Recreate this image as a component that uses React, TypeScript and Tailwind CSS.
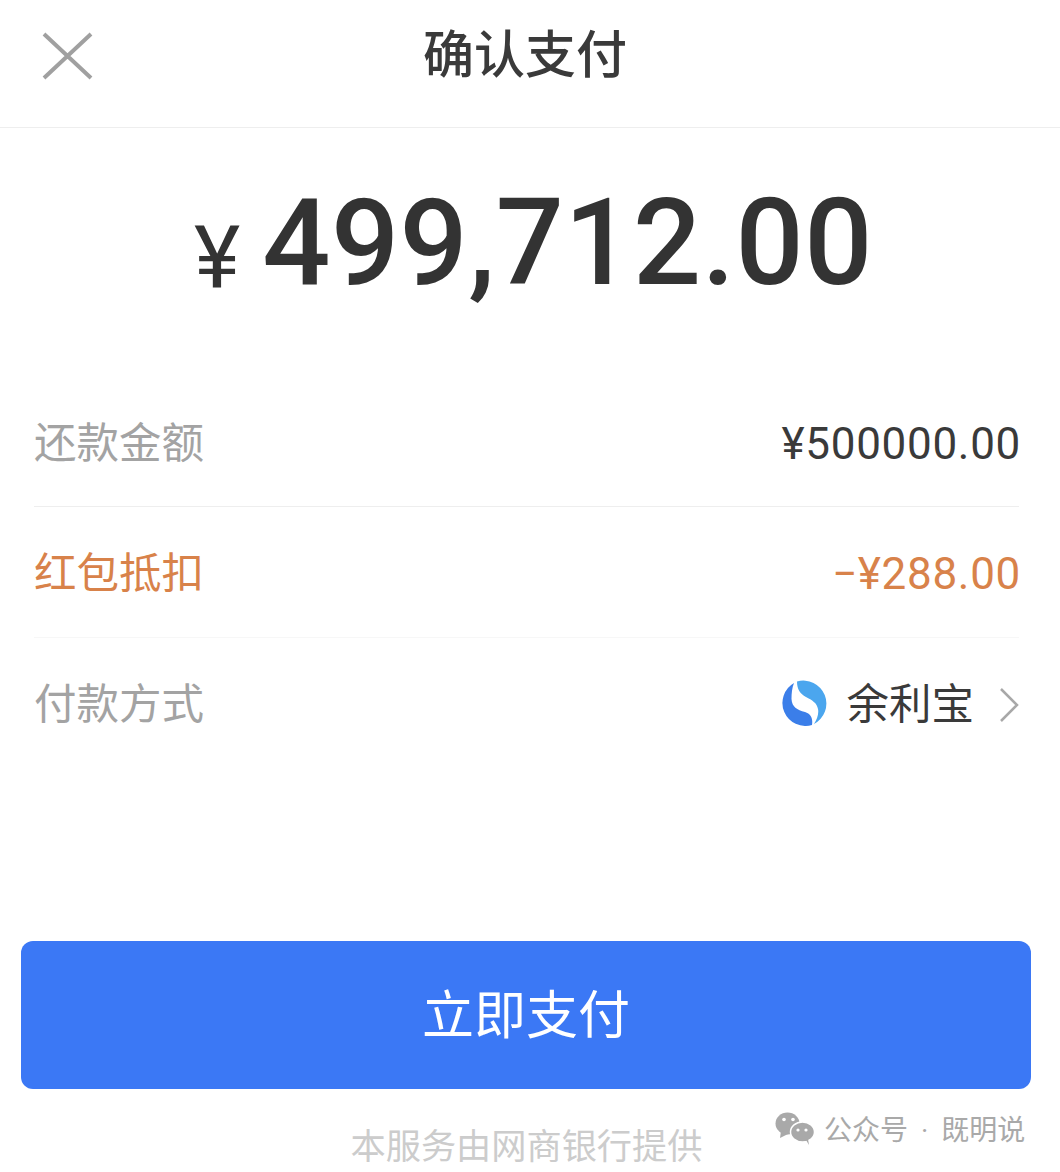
const CJK = "font-['Roboto','Noto_Sans_CJK_SC',sans-serif]";

function Row({ label, labelClass, className, children }: { label: string; labelClass: string; className: string; children: React.ReactNode }) {
  return (
    <div className={`flex items-center justify-between ${className}`}>
      <span className={`text-[42.5px] ${labelClass}`}>{label}</span>
      {children}
    </div>
  );
}

function YuLiBao() {
  return (
    <svg className="mb-[4px]" width="46" height="46" viewBox="0 0 46 46">
      <path d="M12 3A23 23 0 0 0 30 45C31 38 29 34 23 32C15 30 10 27 9.5 19C9.5 13 10 8 12 3z" fill="#3b7ee9" />
      <path d="M15 1.5A23 23 0 0 1 32 44C35 39 37 34 36 29C35 23 30 20 24 17C18 14 15 9 15 1.5z" fill="#4ba6ee" />
    </svg>
  );
}

function WeChat() {
  return (
    <svg className="mb-[5px]" width="40" height="33" viewBox="0 0 40 33">
      <ellipse cx="12.5" cy="11.5" rx="12" ry="11" fill="#a9a9a9" />
      <path d="M6 19l-1 7 8-4z" fill="#a9a9a9" />
      <ellipse cx="27.5" cy="20" rx="12" ry="10" fill="#a9a9a9" stroke="#fff" strokeWidth="1.5" />
      <path d="M31 28l3 5-1-6z" fill="#a9a9a9" />
      <circle cx="9" cy="7.5" r="1.8" fill="#fff" />
      <circle cx="18" cy="7.5" r="1.8" fill="#fff" />
      <circle cx="23" cy="18" r="1.6" fill="#fff" />
      <circle cx="31" cy="18" r="1.6" fill="#fff" />
    </svg>
  );
}

export default function App() {
  return (
    <div className={`relative h-[1172px] w-[1060px] overflow-hidden bg-white ${CJK}`}>
      <header className="relative flex h-[128px] items-center justify-center border-b border-[#eeeeee] pb-[14px] pr-[10px]">
        <svg className="absolute left-[42px] top-[32px]" width="52" height="48" viewBox="0 0 52 48">
          <path d="M2 2l47 44M49 2L2 46" stroke="#a0a0a0" strokeWidth="4" fill="none" />
        </svg>
        <h1 className="text-[51px] font-medium text-[#3a3a3a]">确认支付</h1>
      </header>

      <div className="flex h-[230px] items-center justify-center pl-[7px] text-[#333333]">
        <span className="mr-[22px] mt-[30px] text-[88px] font-normal leading-none">¥</span>
        <span className="text-[120px] font-medium leading-none tracking-[0.5px]">499,712.00</span>
      </div>

      <div className="ml-[34px] mr-[41px] mt-[20px]">
        <Row label="还款金额" labelClass="text-[#a3a3a3]" className="h-[129px] border-b border-[#eeeeee] pt-[3px]">
          <span className="-mr-[2px] text-[44px] tracking-[0.7px] text-[#3a3a3a]">¥500000.00</span>
        </Row>
        <Row label="红包抵扣" labelClass="text-[#d8824a]" className="h-[131px] border-b border-[#f7f7f7] pt-[3px]">
          <span className="-mr-[2px] text-[44px] tracking-[0.7px] text-[#d8824a]">−¥288.00</span>
        </Row>
        <Row label="付款方式" labelClass="text-[#a3a3a3]" className="h-[134px]">
          <div className="flex items-center">
            <YuLiBao />
            <span className="ml-[18px] text-[42.5px] text-[#3a3a3a]">余利宝</span>
            <svg className="ml-[25px]" width="20" height="36" viewBox="0 0 20 36">
              <path d="M2 2l16 16L2 34" stroke="#a8a8a8" strokeWidth="2.5" fill="none" />
            </svg>
          </div>
        </Row>
      </div>

      <button className="mx-[21px] mt-[169px] flex h-[148px] w-[1010px] items-center justify-center rounded-[12px] bg-[#3b78f5] pt-[4px] text-[52px] text-white">
        立即支付
      </button>

      <p className="mt-[33px] pr-[7px] text-center text-[35.2px] leading-[50px] text-[#cccccc]">本服务由网商银行提供</p>

      <div className="absolute left-[775px] top-[1110px] flex items-center text-[#a9a9a9]">
        <WeChat />
        <span className="ml-[9px] text-[28px]">公众号</span>
        <span className="mx-[13px] text-[28px]">·</span>
        <span className="text-[28px]">既明说</span>
      </div>
    </div>
  );
}
